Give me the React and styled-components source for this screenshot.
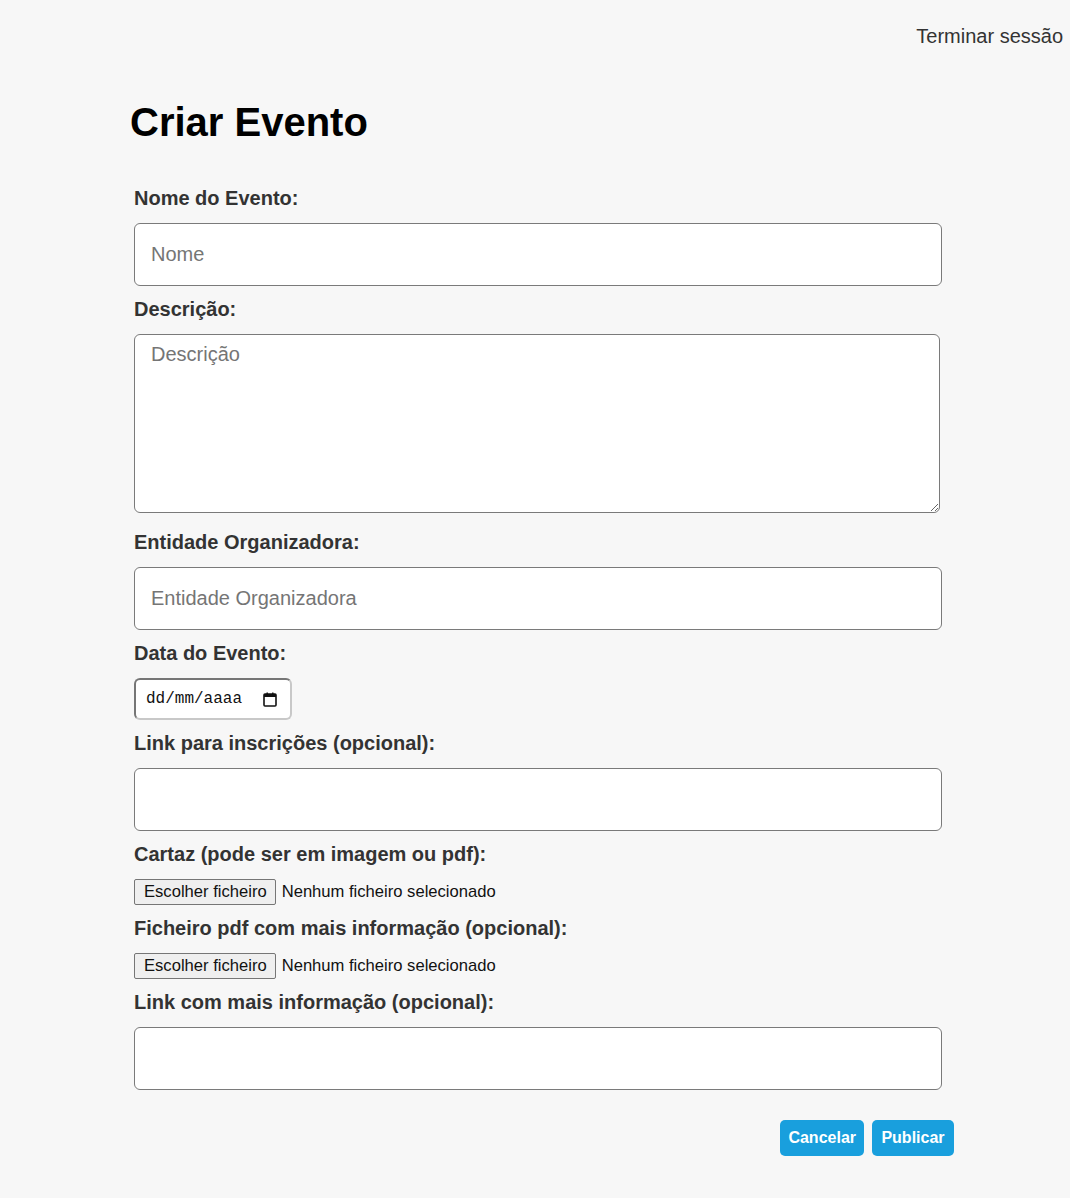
import React from "react";
import styled, { createGlobalStyle } from "styled-components";

const Global = createGlobalStyle`
  html, body { margin: 0; padding: 0; background: #f7f7f7; }
  body { font-family: "Liberation Sans", Arial, sans-serif; color: #333; }
  * { box-sizing: border-box; }
`;

const Page = styled.div`
  width: 1070px;
  min-height: 1198px;
  background: #f7f7f7;
`;

const TopBar = styled.header`
  display: flex;
  justify-content: flex-end;
  padding: 25px 7px 0 0;
  height: 48px;
`;

const LogoutLink = styled.a`
  font-size: 20px;
  line-height: 23px;
  color: #333;
  text-decoration: none;
  cursor: pointer;
`;

const Main = styled.main`
  padding: 51px 0 40px 134px;
`;

const Title = styled.h1`
  margin: 0 0 42px -4px;
  font-size: 40px;
  line-height: 46px;
  font-weight: bold;
  color: #000;
`;

const Form = styled.form`
  width: 808px;
  display: flex;
  flex-direction: column;
  align-items: flex-start;
`;

const Label = styled.label`
  display: block;
  font-size: 20px;
  line-height: 23px;
  font-weight: bold;
  color: #333;
  margin: ${(p) => (p.$first ? "0" : "12px")} 0 13px;
`;

const TextInput = styled.input`
  width: 808px;
  height: 63px;
  padding: 0 16px;
  border: 1px solid #7a7a7a;
  border-radius: 6px;
  background: #fff;
  font-family: "Liberation Sans", Arial, sans-serif;
  font-size: 20px;
  color: #333;
  outline: none;
  &::placeholder { color: #757575; }
`;

const TextArea = styled.textarea`
  display: block;
  width: 806px;
  height: 179px;
  padding: 8px 16px;
  border: 1px solid #7a7a7a;
  border-radius: 6px;
  background: #fff;
  font-family: "Liberation Sans", Arial, sans-serif;
  font-size: 20px;
  color: #333;
  outline: none;
  margin-bottom: 6px;
  &::placeholder { color: #757575; }
`;

const DateBox = styled.div`
  width: 158px;
  height: 42px;
  display: flex;
  align-items: center;
  justify-content: space-between;
  padding: 0 13px 0 10px;
  background: #fff;
  border: 2px solid;
  border-color: #767676 #c8c8c8 #c8c8c8 #767676;
  border-radius: 6px;
`;

const DateText = styled.span`
  font-family: "Liberation Mono", "DejaVu Sans Mono", monospace;
  font-size: 16px;
  color: #111;
`;

const FileRow = styled.div`
  display: flex;
  align-items: center;
  gap: 6px;
  height: 26px;
`;

const FileButton = styled.span`
  display: inline-flex;
  align-items: center;
  height: 26px;
  padding: 0 8px 0 9px;
  background: #efefef;
  border: 1px solid #767676;
  border-radius: 2px;
  font-size: 16.6px;
  color: #111;
`;

const FileName = styled.span`
  font-size: 16.6px;
  color: #111;
`;

const Actions = styled.div`
  width: 820px;
  display: flex;
  justify-content: flex-end;
  gap: 8px;
  margin-top: 30px;
`;

const Button = styled.button`
  height: 36px;
  min-width: 82px;
  padding: 0 8px;
  border: none;
  border-radius: 5px;
  background: #199fdd;
  color: #fff;
  font-family: "Liberation Sans", Arial, sans-serif;
  font-size: 16px;
  font-weight: bold;
  cursor: pointer;
`;

const CalendarIcon = () => (
  <svg width="14" height="15" viewBox="0 0 14 15" aria-hidden="true">
    <rect x="1" y="2" width="12" height="12" rx="1" fill="none" stroke="#111" strokeWidth="1.6" />
    <rect x="1" y="2" width="12" height="3" fill="#111" />
    <rect x="3.5" y="0.5" width="1.4" height="3" fill="#111" />
    <rect x="9.1" y="0.5" width="1.4" height="3" fill="#111" />
  </svg>
);

const FilePicker = () => (
  <FileRow>
    <FileButton>Escolher ficheiro</FileButton>
    <FileName>Nenhum ficheiro selecionado</FileName>
  </FileRow>
);

export default function App() {
  return (
    <Page>
      <Global />
      <TopBar>
        <LogoutLink>Terminar sessão</LogoutLink>
      </TopBar>
      <Main>
        <Title>Criar Evento</Title>
        <Form onSubmit={(e) => e.preventDefault()}>
          <Label $first>Nome do Evento:</Label>
          <TextInput placeholder="Nome" />
          <Label>Descrição:</Label>
          <TextArea placeholder="Descrição" />
          <Label>Entidade Organizadora:</Label>
          <TextInput placeholder="Entidade Organizadora" />
          <Label>Data do Evento:</Label>
          <DateBox>
            <DateText>dd/mm/aaaa</DateText>
            <CalendarIcon />
          </DateBox>
          <Label>Link para inscrições (opcional):</Label>
          <TextInput />
          <Label>Cartaz (pode ser em imagem ou pdf):</Label>
          <FilePicker />
          <Label>Ficheiro pdf com mais informação (opcional):</Label>
          <FilePicker />
          <Label>Link com mais informação (opcional):</Label>
          <TextInput />
          <Actions>
            <Button type="button">Cancelar</Button>
            <Button type="submit">Publicar</Button>
          </Actions>
        </Form>
      </Main>
    </Page>
  );
}
